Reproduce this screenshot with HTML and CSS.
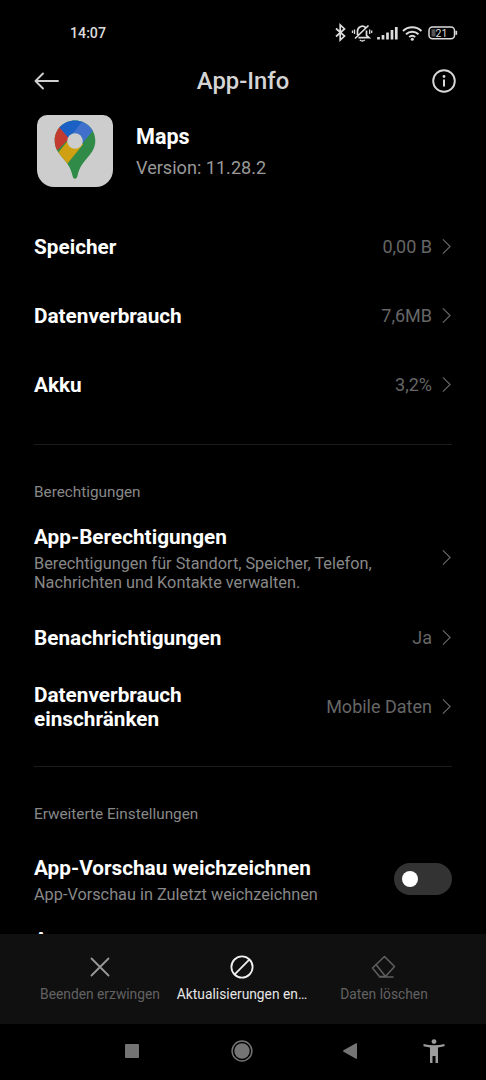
FILE: index.html
```html
<!DOCTYPE html>
<html lang="de">
  <head>
    <meta charset="UTF-8" />
    <meta name="viewport" content="width=device-width, initial-scale=1.0" />
    <title>App-Info</title>
    <link rel="stylesheet" href="styles.css">
  </head>
  <body>
    <div class="status-bar">
      <span class="status-bar__time">14:07</span>
      <svg class="status-bar__icons" width="124" height="20" viewBox="0 0 124 20" fill="none" stroke="#dcdcdc">
        <!-- bluetooth -->
        <path d="M2 5.500l8.500 7.500-4.300 4V2l4.300 4L2 13.500" stroke-width="1.700" />
        <!-- muted bell -->
        <path d="M23.500 12V8a4.800 4.800 0 0 1 8-3.500M32.500 7.500v5l2.500 2.200H24.500M34.500 2.500L21 15.500" stroke-width="1.700" />
        <path d="M25.800 17q2.500 2 5 0M20.500 6.500v4.500M35.700 6.500v4.500M18.500 7.500v2.500M37.700 7.500v2.500" stroke-width="1.300" />
        <!-- signal -->
        <path d="M44.500 14v2.500M49 12v4.500M53.500 9.500v7M58 7v9.500M62.300 4v12.500" stroke-width="2.700" />
        <!-- wifi -->
        <path d="M69 8a13.500 13.500 0 0 1 18.500 0M72 11.200a9 9 0 0 1 12.500 0M75.200 14a4.600 4.600 0 0 1 6 0" stroke-width="2" />
        <circle cx="78.300" cy="16.200" r="1.500" fill="#dcdcdc" stroke="none" />
        <!-- battery -->
        <rect x="95" y="4" width="25.500" height="11.800" rx="3.500" stroke-width="1.500" />
        <path d="M97.500 6.300h4v7.200h-4z" fill="#555" stroke="none" />
        <path d="M122.300 7.800v4" stroke-width="1.700" />
        <text x="101.500" y="13.500" class="status-bar__battery">21</text>
      </svg>
    </div>

    <header class="header">
      <svg width="26" height="20" viewBox="0 0 26 20" fill="none" stroke="#d0d0d0" stroke-width="1.900" stroke-linecap="round" stroke-linejoin="round">
        <path d="M24 10H1.500M9 2.500L1.500 10 9 17.500" />
      </svg>
      <h1 class="header__title">App-Info</h1>
      <svg width="24" height="24" viewBox="0 0 24 24" fill="none" stroke="#d8d8d8" stroke-width="1.900">
        <circle cx="12" cy="12" r="10.800" />
        <path d="M12 10.500V17.500" stroke-width="2" />
        <circle cx="12" cy="7.500" r="1.400" fill="#d8d8d8" stroke="none" />
      </svg>
    </header>

    <main class="content">
      <section class="app">
        <div class="app__icon">
          <svg width="42" height="60" viewBox="0 0 42 60">
            <defs>
              <clipPath id="pin">
                <path d="M21 0.500C9.500 0.500 0.700 9.500 0.700 20.500c0 7 3 11.500 7.300 16.500 5 6 8.500 10 10.300 18 .5 2.200 1.200 3.800 2.700 3.800s2.200-1.600 2.700-3.800c1.800-8 5.300-12 10.300-18 4.300-5 7.300-9.500 7.300-16.500C41.300 9.500 32.500 0.500 21 0.500z" />
              </clipPath>
            </defs>
            <g clip-path="url(#pin)">
              <path d="M0 0h42v60H0z" fill="#2f8b47" />
              <path d="M-1 39L21 12l8 12.500L9 49z" fill="#cfa012" />
              <path d="M0 0l18.500 15.500L1.500 32H0z" fill="#c33b30" />
              <path d="M5 7L14-1h17L15 18.500z" fill="#1b60c5" />
              <path d="M31-2L15 18l13 6L41 8z" fill="#3e70cc" />
            </g>
            <circle cx="21" cy="21" r="7.800" fill="#cdcdcd" />
          </svg>
        </div>
        <div>
          <h2 class="app__name">Maps</h2>
          <p class="app__version">Version: 11.28.2</p>
        </div>
      </section>

      <ul class="list">
        <li class="list__item">
          <span class="list__title">Speicher</span>
          <span class="list__value">0,00 B</span>
          <svg class="chevron" viewBox="0 0 10 18"><path d="M1 1l8 8-8 8" /></svg>
        </li>
        <li class="list__item">
          <span class="list__title">Datenverbrauch</span>
          <span class="list__value">7,6MB</span>
          <svg class="chevron" viewBox="0 0 10 18"><path d="M1 1l8 8-8 8" /></svg>
        </li>
        <li class="list__item">
          <span class="list__title">Akku</span>
          <span class="list__value">3,2%</span>
          <svg class="chevron" viewBox="0 0 10 18"><path d="M1 1l8 8-8 8" /></svg>
        </li>
      </ul>

      <h3 class="section-title">Berechtigungen</h3>
      <ul class="list">
        <li class="list__item list__item--tall">
          <div class="list__text">
            <span class="list__title">App-Berechtigungen</span>
            <p class="list__desc">Berechtigungen für Standort, Speicher, Telefon,<br>Nachrichten und Kontakte verwalten.</p>
          </div>
          <svg class="chevron" viewBox="0 0 10 18"><path d="M1 1l8 8-8 8" /></svg>
        </li>
        <li class="list__item">
          <span class="list__title">Benachrichtigungen</span>
          <span class="list__value">Ja</span>
          <svg class="chevron" viewBox="0 0 10 18"><path d="M1 1l8 8-8 8" /></svg>
        </li>
        <li class="list__item">
          <span class="list__title">Datenverbrauch<br>einschränken</span>
          <span class="list__value">Mobile Daten</span>
          <svg class="chevron" viewBox="0 0 10 18"><path d="M1 1l8 8-8 8" /></svg>
        </li>
      </ul>

      <h3 class="section-title">Erweiterte Einstellungen</h3>
      <ul class="list">
        <li class="list__item list__item--switch">
          <div class="list__text">
            <span class="list__title">App-Vorschau weichzeichnen</span>
            <p class="list__desc">App-Vorschau in Zuletzt weichzeichnen</p>
          </div>
          <span class="switch"></span>
        </li>
        <li class="list__item list__item--cut">
          <span class="list__title">A</span>
        </li>
      </ul>
    </main>

    <div class="actions">
      <div class="actions__item">
        <svg width="26" height="26" viewBox="0 0 26 26" fill="none" stroke="#999" stroke-width="1.800" stroke-linecap="round">
          <path d="M4.500 4.500l17 17M21.500 4.500l-17 17" />
        </svg>
        <span>Beenden erzwingen</span>
      </div>
      <div class="actions__item actions__item--active">
        <svg width="26" height="26" viewBox="0 0 26 26" fill="none" stroke="#f0f0f0" stroke-width="1.800">
          <circle cx="13" cy="13" r="10.600" />
          <path d="M20.300 5.700L5.700 20.300" />
        </svg>
        <span>Aktualisierungen en…</span>
      </div>
      <div class="actions__item">
        <svg width="26" height="26" viewBox="0 0 26 26" fill="none" stroke="#5e5e5e" stroke-width="1.600" stroke-linejoin="round" stroke-linecap="round">
          <path d="M13.500 2.500L23.500 12.500 14.500 22.500H8.500L1.500 14zM5 10.500L14.500 22.500M8.500 23H22" />
        </svg>
        <span>Daten löschen</span>
      </div>
    </div>

    <nav class="nav-bar">
      <svg width="14" height="14" viewBox="0 0 14 14"><rect width="14" height="14" rx="1" fill="#747474" /></svg>
      <svg width="22" height="22" viewBox="0 0 22 22">
        <circle cx="11" cy="11" r="9.900" fill="none" stroke="#747474" stroke-width="1.500" />
        <circle cx="11" cy="11" r="7.700" fill="#747474" />
      </svg>
      <svg width="14" height="16" viewBox="0 0 14 16"><path d="M14 0.500v15q-.5.500-1.500 0L0.500 8.700q-.8-.7 0-1.400L12.500 0.500q1-.5 1.500 0z" fill="#747474" /></svg>
      <svg width="22" height="24" viewBox="0 0 22 24" fill="#9c9c9c">
        <circle cx="11" cy="2.600" r="2.400" />
        <path d="M0.500 5Q11 7.500 21.500 5v2.200L15 8.500V24h-2.500v-7h-3v7H7V8.500L0.500 7.200z" />
      </svg>
    </nav>
  </body>
</html>
```

FILE: styles.css
```css
* {
  box-sizing: border-box;
}

body {
  font-family: Roboto, sans-serif;
  margin: 0;
  height: 1080px;
  display: flex;
  flex-direction: column;
  overflow: hidden;
  background-color: #000;
  color: #fff;
}

h1,
h2,
h3,
p,
ul {
  margin: 0;
  padding: 0;
}

svg {
  display: block;
  flex-shrink: 0;
}

/* Status bar */
.status-bar {
  height: 48px;
  padding: 17px 28px 0 70px;
  display: flex;
  justify-content: space-between;
  align-items: center;
}

.status-bar__time {
  font-size: 14.2px;
  font-weight: 500;
  line-height: 20px;
  color: #dcdcdc;
}

.status-bar__battery {
  font-size: 10.5px;
  font-weight: 400;
  fill: #dcdcdc;
  stroke: none;
}

.header {
  height: 67px;
  padding: 0 30px 2px 34px;
  display: flex;
  justify-content: space-between;
  align-items: center;
}

.header__title {
  margin-right: 6px;
  font-size: 23.8px;
  font-weight: 500;
  line-height: 28px;
  color: #d4d4d4;
}

/* Scrolled content */
.content {
  height: 819px;
  padding: 0 34px;
  overflow: hidden;
}

.app {
  height: 97px;
  padding-left: 3px;
  display: flex;
  gap: 23px;
}

.app__icon {
  width: 76px;
  height: 72px;
  padding-top: 5px;
  display: flex;
  justify-content: center;
  border-radius: 10px 10px 17px 17px;
  background-color: #cdcdcd;
}

.app__name {
  padding-top: 8px;
  font-size: 21.6px;
  font-weight: 700;
  line-height: 28px;
}

.app__version {
  padding-top: 5px;
  font-size: 18.1px;
  line-height: 24px;
  color: #999;
}

.list {
  list-style-type: none;
}

.list__item {
  height: 69px;
  display: flex;
  align-items: center;
}

.list__item--tall {
  height: 91px;
}

.list__item--switch {
  height: 90px;
}

.list__item--cut {
  padding-top: 4px;
  align-items: flex-start;
}

.list__text {
  padding-top: 2px;
}

.list__title {
  font-size: 20.75px;
  font-weight: 700;
  line-height: 24px;
}

.list__desc {
  padding-top: 5px;
  font-size: 16.3px;
  line-height: 19px;
  color: #888;
}

.list__value {
  margin-left: auto;
  font-size: 18px;
  color: #666;
}

.chevron {
  width: 9px;
  height: 17px;
  margin: 0 1px 0 10px;
  fill: none;
  stroke: #666;
  stroke-width: 1.3;
}

.list__text + .chevron,
.switch {
  margin-left: auto;
}

.section-title {
  margin: 25px 0 10px;
  padding-top: 37px;
  border-top: 1px solid #1c1c1c;
  font-size: 15.3px;
  font-weight: 400;
  line-height: 20px;
  color: #888;
}

.switch {
  width: 58px;
  height: 32px;
  padding: 8px;
  border-radius: 16px;
  background-color: #333;
}

.switch::before {
  content: "";
  display: block;
  width: 16px;
  height: 16px;
  border-radius: 50%;
  background-color: #fff;
}

/* Bottom actions */
.actions {
  height: 90px;
  padding: 20px 31px 0 29px;
  display: grid;
  grid-template-columns: repeat(3, 1fr);
  background-color: #101010;
}

.actions__item {
  display: flex;
  flex-direction: column;
  align-items: center;
  gap: 4px;
  font-size: 13.8px;
  line-height: 20px;
  white-space: nowrap;
  color: #626262;
}

.actions__item--active {
  color: #e6e6e6;
}

.nav-bar {
  height: 56px;
  padding: 0 20px 2px 76px;
  display: grid;
  grid-template-columns: 111px 110px 105px 64px;
  justify-items: center;
  align-items: center;
}
```
